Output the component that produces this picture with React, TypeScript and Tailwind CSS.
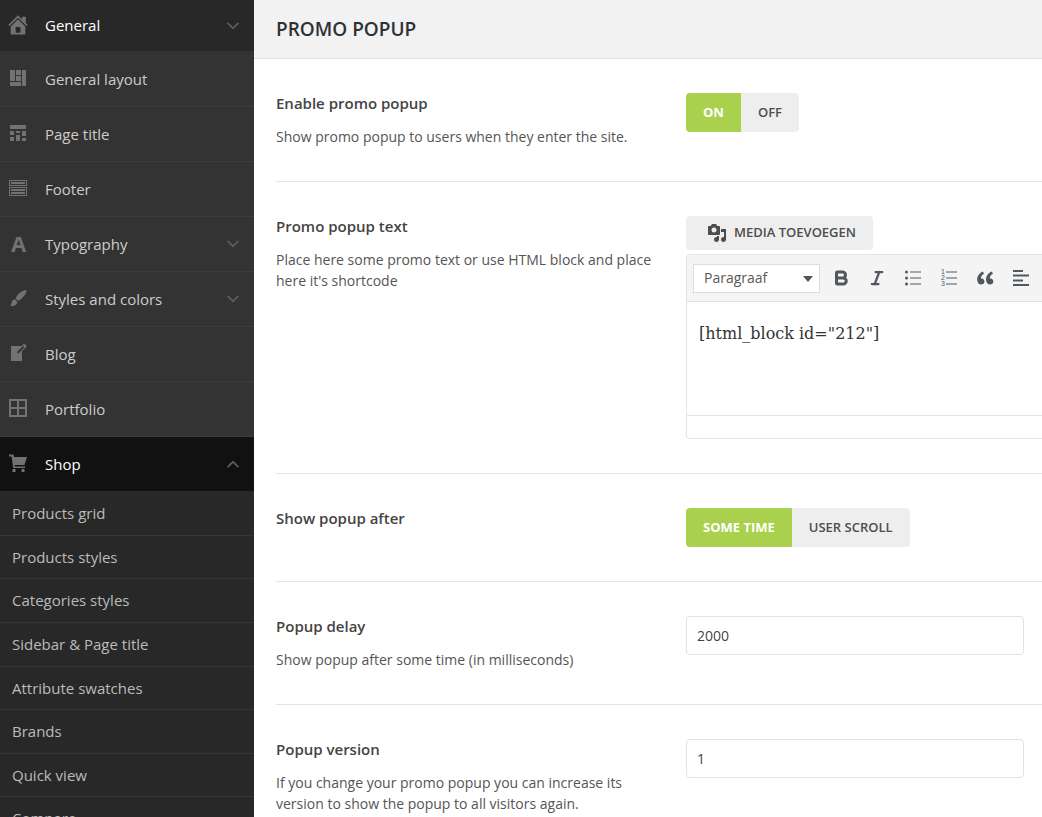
import { useState, type ReactNode } from 'react'
import { Bold, Italic } from 'lucide-react'

type MenuItem = {
  label: string
  icon: ReactNode
  arrow?: 'up' | 'down'
  state?: 'open' | 'active'
}

function Dashicon({ d, className = 'size-5' }: { d: string; className?: string }) {
  return (
    <svg viewBox="0 0 20 20" fill="currentColor" fillRule="evenodd" className={className} aria-hidden="true">
      <path d={d} />
    </svg>
  )
}

const menu: MenuItem[] = [
  {
    label: 'General',
    icon: <Dashicon d="M10 .2l4.200 4.200V1.800h3.600v6.200l1.900 1.900-1.200 1.200L10 2.700l-8.500 8.400L.3 9.900zM10 4.200l7.300 7.200V19.500H2.700V11.400zM7.600 12v5.800h4.800V12z" />,
    arrow: 'down',
    state: 'open',
  },
  {
    label: 'General layout',
    icon: <Dashicon d="M2 2h5v11H2V2zm6 0h5v5H8V2zm6 0h4v16h-4V2zM8 8h5v5H8V8zm-6 6h11v4H2v-4z" />,
  },
  {
    label: 'Page title',
    icon: <Dashicon d="M2 2h16v4H2V2zm0 10V8h4v4H2zm6-2V8h4v2H8zm6 3V8h4v5h-4zm-6 5v-6h4v6H8zm-6 0v-4h4v4H2zm12 0v-3h4v3h-4z" />,
  },
  {
    label: 'Footer',
    icon: <Dashicon d="M1 2h18v6H1V2zm1 1v4h16V3H2zm1 1h14v2H3V4zM1 9h18v9H1V9zm1 1v7h16v-7H2zm1 1h14v2H3v-2zm0 3h14v2H3v-2z" />,
  },
  {
    label: 'Typography',
    icon: <span className="w-5 pl-px text-center text-[22px] leading-4 font-bold">A</span>,
    arrow: 'down',
  },
  {
    label: 'Styles and colors',
    icon: <Dashicon d="M18.3 2.2c.6.8-.2 2.9-2.100 5.500-1.900 2.500-4.300 4.500-6.100 5.200L7.600 10.400c.7-1.900 2.500-4.200 4.900-6.100 2.600-2 5-2.900 5.800-2.100zM6.900 11.200l2.400 2.500c-.1 2.900-2.900 4.700-7.300 4.300 1.300-.8 1.300-1.800 1.700-3.400.4-1.900 1.500-3.200 3.200-3.400z" />,
    arrow: 'down',
  },
  {
    label: 'Blog',
    icon: <Dashicon d="M16.89 1.2l1.41 1.41c.39.39.39 1.02 0 1.41L14 8.33V18H3V3h10.67l1.8-1.8c.4-.39 1.03-.4 1.42 0zm-5.66 8.48l5.37-5.36-1.42-1.42-5.36 5.37-.71 2.12z" />,
  },
  {
    label: 'Portfolio',
    icon: <Dashicon d="M1 1h18v18H1V1zm2 2v6h6V3H3zm8 0v6h6V3h-6zm-8 8v6h6v-6H3zm8 0v6h6v-6h-6z" />,
  },
  {
    label: 'Shop',
    icon: <Dashicon d="M1 1.500h4.500l.6 2.500H19l-2.600 8H6.500l.3 1.500H17V15H5.200L3.600 3.500H1zM4.500 16h3v3h-3zm9 0h3v3h-3z" />,
    arrow: 'up',
    state: 'active',
  },
]

const shopItems = [
  'Products grid',
  'Products styles',
  'Categories styles',
  'Sidebar & Page title',
  'Attribute swatches',
  'Brands',
  'Quick view',
  'Compare',
]

const stateClasses = {
  open: 'h-[52px] bg-[#282828] text-white border-[#333]',
  active: 'h-[55px] bg-[#111] text-white border-[#2b2b2b]',
  normal: 'h-[55px] bg-[#333] text-[#ccc] border-[#3d3d3d]',
}

const arrows = {
  down: 'M5 6l5 5 5-5 2 1-7 7-7-7z',
  up: 'M15 14l-5-5-5 5-2-1 7-7 7 7z',
}

function Sidebar() {
  return (
    <nav className="w-[254px] shrink-0 bg-[#282828] text-[15px]">
      {menu.map((item) => (
        <a
          key={item.label}
          href="#"
          className={`flex items-center border-b pr-3 pl-2 ${stateClasses[item.state ?? 'normal']}`}
        >
          <span className="mb-0.5 flex w-[37px] text-[#727272]">{item.icon}</span>
          <span className="flex-1">{item.label}</span>
          {item.arrow && <Dashicon d={arrows[item.arrow]} className="size-[18px] text-[#5c5c5c]" />}
        </a>
      ))}
      <div className="grid min-h-[349px] auto-rows-fr">
        {shopItems.map((label) => (
          <a key={label} href="#" className="flex items-center border-b border-[#363636] px-3 text-[#bbb]">
            {label}
          </a>
        ))}
      </div>
    </nav>
  )
}

function Field({ title, htmlFor, description, children }: {
  title: string
  htmlFor?: string
  description?: string
  children: ReactNode
}) {
  return (
    <div className="flex border-b border-[#e5e5e5] py-[34px]">
      <div className="w-[410px] shrink-0 pr-6">
        <label htmlFor={htmlFor} className="block text-[15px] leading-5 font-semibold text-[#444]">
          {title}
        </label>
        {description && <p className="mt-[13px] text-sm leading-[21px] text-[#555]">{description}</p>}
      </div>
      <div className="min-w-0 flex-1">{children}</div>
    </div>
  )
}

function Toggle({ id, options }: { id: string; options: string[] }) {
  const [selected, setSelected] = useState(options[0])
  return (
    <div id={id} role="group" className="inline-flex overflow-hidden rounded-[4px] align-top">
      {options.map((option) => (
        <button
          key={option}
          type="button"
          aria-pressed={selected === option}
          onClick={() => setSelected(option)}
          className={`h-[39px] px-[17px] text-[13px] uppercase ${
            selected === option ? 'bg-[#a9d14e] font-bold text-white' : 'bg-[#eee] font-semibold text-[#4d4d4d]'
          }`}
        >
          {option}
        </button>
      ))}
    </div>
  )
}

function ToolbarButton({ label, children }: { label: string; children: ReactNode }) {
  return (
    <button type="button" aria-label={label} className="flex h-8 w-9 shrink-0 items-center justify-center text-[#50575e]">
      {children}
    </button>
  )
}

function Editor() {
  return (
    <div>
      <button
        type="button"
        className="flex h-[34px] w-[187px] items-center justify-center gap-[7px] rounded-[4px] bg-[#eee] pl-1 text-[13px] font-semibold text-[#4d4d4d] uppercase"
      >
        <Dashicon d="M13 11V4c0-.55-.45-1-1-1h-1.67L9 1H5L3.67 3H2c-.55 0-1 .45-1 1v7c0 .55.45 1 1 1h10c.55 0 1-.45 1-1zM7 4.500c1.380 0 2.500 1.120 2.500 2.500S8.380 9.500 7 9.500 4.500 8.380 4.500 7 5.620 4.500 7 4.500zM14 6h5v10.500c0 1.380-1.120 2.500-2.500 2.500S14 17.880 14 16.500s1.120-2.500 2.500-2.500c.17 0 .34.02.5.05V9h-3V6zm-4 8.050V13h2v3.500c0 1.380-1.120 2.500-2.500 2.500S7 17.880 7 16.500 8.120 14 9.500 14c.17 0 .34.02.5.05z" />
        Media toevoegen
      </button>
      <div className="mt-1 overflow-hidden rounded-l-[4px] border border-r-0 border-[#e3e3e3]">
        <div className="flex h-[47px] items-center overflow-hidden border-b border-[#e0e0e0] bg-[#f4f4f4] pl-1.5">
          <div className="relative mr-[3px] shrink-0">
            <select
              aria-label="Paragraaf"
              className="h-[29px] w-[127px] appearance-none border border-[#ddd] bg-white pl-2.5 text-sm text-[#595959]"
            >
              <option>Paragraaf</option>
            </select>
            <svg viewBox="0 0 10 6" className="pointer-events-none absolute top-3 right-[7px] h-1.5 w-2.5" aria-hidden="true">
              <path d="M0 0h10L5 6z" fill="#50575e" />
            </svg>
          </div>
          <ToolbarButton label="Vet">
            <Bold className="size-[18px]" strokeWidth={4} />
          </ToolbarButton>
          <ToolbarButton label="Cursief">
            <Italic className="size-[18px]" strokeWidth={3} />
          </ToolbarButton>
          <ToolbarButton label="Opsomming">
            <svg viewBox="0 0 20 20" fill="currentColor" className="size-5" aria-hidden="true">
              <circle cx="3.500" cy="4" r="1.500" />
              <circle cx="3.500" cy="10" r="1.500" />
              <circle cx="3.500" cy="16" r="1.500" />
              <path d="M7 3.500h11v1H7zM7 9.500h11v1H7zM7 15.500h11v1H7z" />
            </svg>
          </ToolbarButton>
          <ToolbarButton label="Genummerde lijst">
            <svg viewBox="0 0 20 20" fill="currentColor" className="size-5" aria-hidden="true">
              <g fontSize="7" fontFamily="Liberation Sans">
                <text x="2" y="6">1</text>
                <text x="2" y="12">2</text>
                <text x="2" y="18">3</text>
              </g>
              <path d="M7 3.500h11v1H7zM7 9.500h11v1H7zM7 15.500h11v1H7z" />
            </svg>
          </ToolbarButton>
          <ToolbarButton label="Citaat">
            <Dashicon
              className="size-[22px]"
              d="M9.490 13.220c0-.74-.2-1.380-.61-1.900-.62-.78-1.830-.88-2.530-.72-.29-1.650 1.110-3.750 2.920-4.650L7.880 4c-2.730 1.300-5.420 4.280-4.960 8.050C3.210 14.430 4.590 16 6.540 16c.85 0 1.560-.25 2.120-.75s.83-1.180.83-2.030zm8.050 0c0-.74-.2-1.380-.61-1.900-.63-.78-1.830-.88-2.530-.72-.29-1.650 1.110-3.750 2.920-4.650L15.930 4c-2.730 1.300-5.410 4.280-4.950 8.050.29 2.380 1.660 3.950 3.610 3.950.85 0 1.560-.25 2.120-.75s.83-1.180.83-2.030z"
            />
          </ToolbarButton>
          <ToolbarButton label="Links uitlijnen">
            <Dashicon d="M2 2h10v2H2V2zm0 4.600h16v2H2v-2zm0 4.800h10v2H2v-2zm0 4.600h16v2H2v-2z" />
          </ToolbarButton>
        </div>
        <textarea
          id="popup-text"
          defaultValue={'[html_block id="212"]'}
          className="block h-[113px] w-full resize-none px-3 pt-[18px] font-[Georgia,'DejaVu_Serif',serif] text-base leading-7 text-[#333] outline-none"
        />
        <div className="h-[23px] border-t border-[#e3e3e3]" />
      </div>
    </div>
  )
}

function NumberInput({ id, value }: { id: string; value: string }) {
  return (
    <div className="pr-[18px]">
      <input
        id={id}
        type="text"
        defaultValue={value}
        className="block h-[39px] w-full rounded-[4px] border border-[#e2e2e2] bg-white px-2.5 text-sm text-[#444] outline-none"
      />
    </div>
  )
}

export default function App() {
  return (
    <div className="flex h-screen overflow-hidden bg-white font-['Open_Sans','Noto_Sans',sans-serif]">
      <Sidebar />
      <main className="min-w-0 flex-1">
        <header className="flex h-[59px] items-center border-b border-[#e2e2e2] bg-[#f2f2f2] pl-[22px]">
          <h1 className="text-[19px] font-semibold text-[#2d3136] uppercase">Promo popup</h1>
        </header>
        <form className="pl-[22px]">
          <Field
            title="Enable promo popup"
            htmlFor="popup-enabled"
            description="Show promo popup to users when they enter the site."
          >
            <Toggle id="popup-enabled" options={['On', 'Off']} />
          </Field>
          <Field
            title="Promo popup text"
            htmlFor="popup-text"
            description="Place here some promo text or use HTML block and place here it's shortcode"
          >
            <Editor />
          </Field>
          <Field title="Show popup after" htmlFor="popup-event">
            <Toggle id="popup-event" options={['Some time', 'User scroll']} />
          </Field>
          <Field
            title="Popup delay"
            htmlFor="popup-delay"
            description="Show popup after some time (in milliseconds)"
          >
            <NumberInput id="popup-delay" value="2000" />
          </Field>
          <Field
            title="Popup version"
            htmlFor="popup-version"
            description="If you change your promo popup you can increase its version to show the popup to all visitors again."
          >
            <NumberInput id="popup-version" value="1" />
          </Field>
        </form>
      </main>
    </div>
  )
}
